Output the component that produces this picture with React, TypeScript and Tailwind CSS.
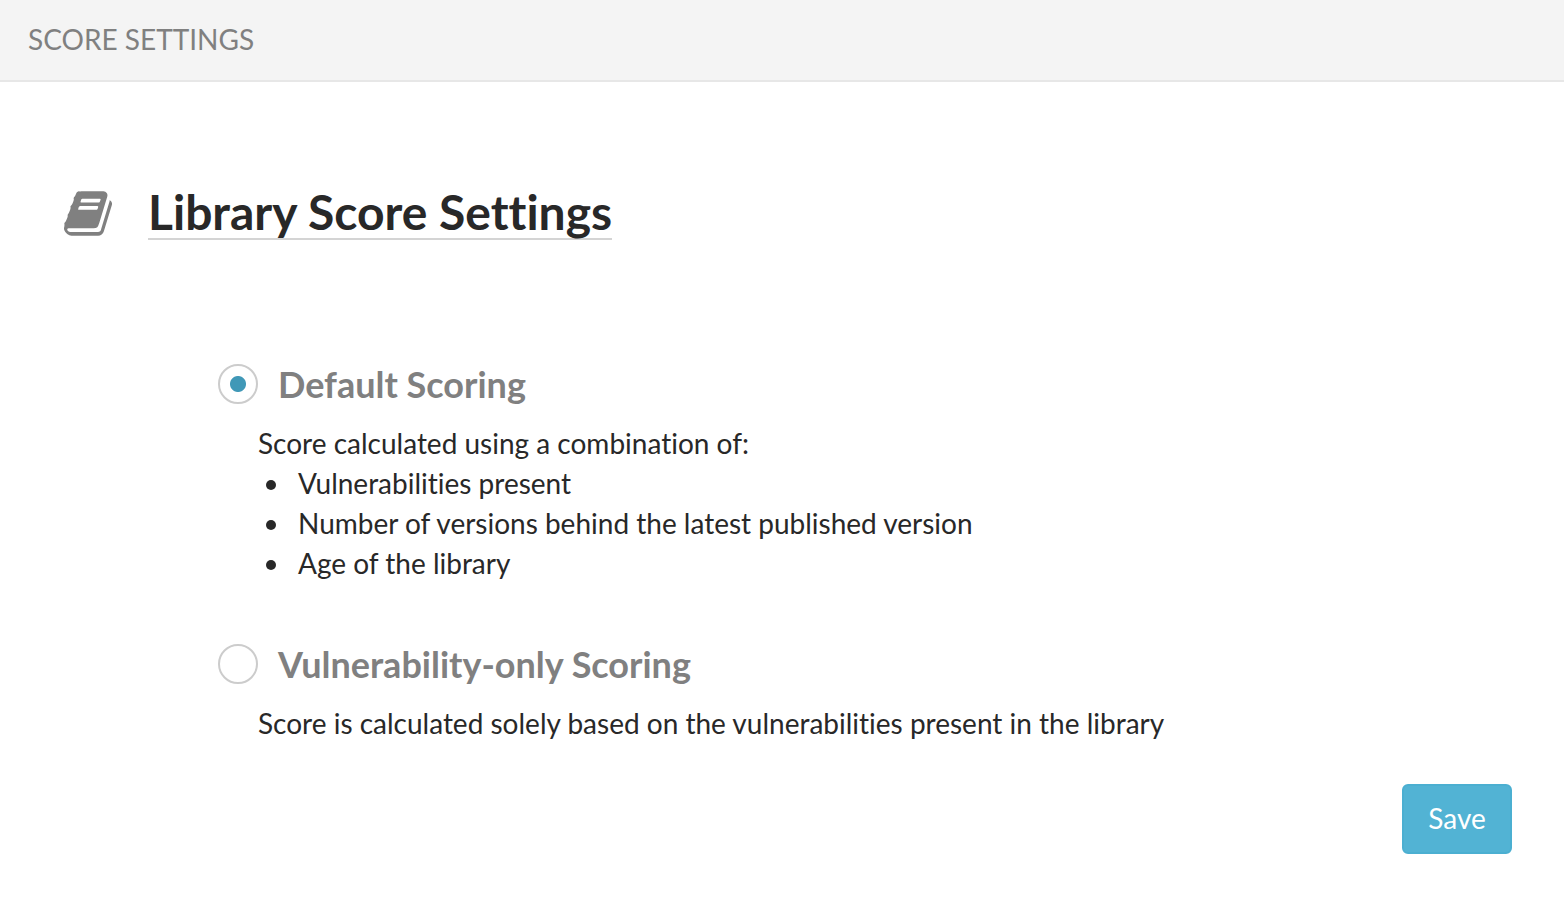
function BookIcon({ className }: { className: string }) {
  return (
    <svg className={className} viewBox="64 128 1664 1536" fill="currentColor" aria-hidden="true">
      <path d="M1703 478q40 57 18 129l-275 906q-19 64-76.5 107.5t-122.5 43.5h-923q-77 0-148.5-53.5t-99.5-131.5q-24-67-2-127 0-4 3-27t4-37q1-8-3-21.5t-3-19.5q2-11 8-21t16.5-23.5 16.5-23.5q23-38 45-91.5t30-91.5q3-10 .5-30t-.5-28q3-11 17-28t17-23q21-36 42-92t25-90q1-9-2.5-32t.5-28q4-13 22-30.5t22-22.5q19-26 42.5-84.5t27.5-96.5q1-8-3-25.5t-2-26.5q2-8 9-18t18-23 17-21q8-12 16.5-30.5t15-35 16-36 19.5-32 26.5-23.5 36-11.5 47.5 5.5l-1 3q38-9 51-9h761q74 0 114 56t18 130l-274 906q-36 119-71.5 153.5t-128.5 34.5h-869q-27 0-38 15-11 16-1 43 24 70 144 70h923q29 0 56-15.5t35-41.5l300-987q7-22 5-57 38 15 59 43zm-1064 2q-4 13 2 22.5t20 9.5h608q13 0 25.5-9.5t16.5-22.5l21-64q4-13-2-22.5t-20-9.5h-608q-13 0-25.5 9.5t-16.5 22.5zm-83 256q-4 13 2 22.5t20 9.5h608q13 0 25.5-9.5t16.5-22.5l21-64q4-13-2-22.5t-20-9.5h-608q-13 0-25.5 9.5t-16.5 22.5z" />
    </svg>
  );
}

const radioClass =
  "m-0 size-10 shrink-0 appearance-none rounded-full border-2 border-[#cccccc] bg-white checked:bg-[radial-gradient(circle,#4098b7_7.5px,transparent_8.5px)]";

const factors = [
  "Vulnerabilities present",
  "Number of versions behind the latest published version",
  "Age of the library",
];

export default function App() {
  return (
    <div className="min-h-screen bg-white font-['Lato',sans-serif] text-[28px] leading-10 text-[#282828] [font-variant-ligatures:none]">
      <header className="border-b-2 border-[#e7e7e7] bg-[#f4f4f4] px-7 pt-[19px] pb-[21px]">
        <h1 className="text-[#808080]">SCORE SETTINGS</h1>
      </header>
      <main className="pt-26 pr-13 pb-15 pl-16">
        <div className="flex items-center gap-9">
          <BookIcon className="h-[45px] w-12 shrink-0 text-[#808080]" />
          <h2 className="border-b-2 border-[#d4d4d4] text-[48px] leading-[52px] font-bold">
            Library Score Settings
          </h2>
        </div>
        <form className="mt-[124px]" onSubmit={(e) => e.preventDefault()}>
          <div className="flex flex-col gap-[61px] pl-[154px]">
            <section>
              <label className="flex items-center gap-5 text-[36px] font-bold text-[#808080]">
                <input type="radio" name="scoring" defaultChecked className={radioClass} />
                Default Scoring
              </label>
              <div className="mt-[19px] pl-10">
                <p>Score calculated using a combination of:</p>
                <ul>
                  {factors.map((factor) => (
                    <li
                      key={factor}
                      className="flex items-center gap-[22px] pl-2 before:mt-1 before:size-2.5 before:shrink-0 before:rounded-full before:bg-current before:content-['']"
                    >
                      {factor}
                    </li>
                  ))}
                </ul>
              </div>
            </section>
            <section>
              <label className="flex items-center gap-5 text-[36px] font-bold text-[#808080]">
                <input type="radio" name="scoring" className={radioClass} />
                Vulnerability-only Scoring
              </label>
              <p className="mt-[19px] pl-10">
                Score is calculated solely based on the vulnerabilities present in the library
              </p>
            </section>
          </div>
          <div className="mt-[41px] flex justify-end">
            <button
              type="submit"
              className="min-w-[110px] rounded-md border-2 border-[#4bafd1] bg-[#52b3d4] px-6 pt-3 pb-[14px] text-white"
            >
              Save
            </button>
          </div>
        </form>
      </main>
    </div>
  );
}
